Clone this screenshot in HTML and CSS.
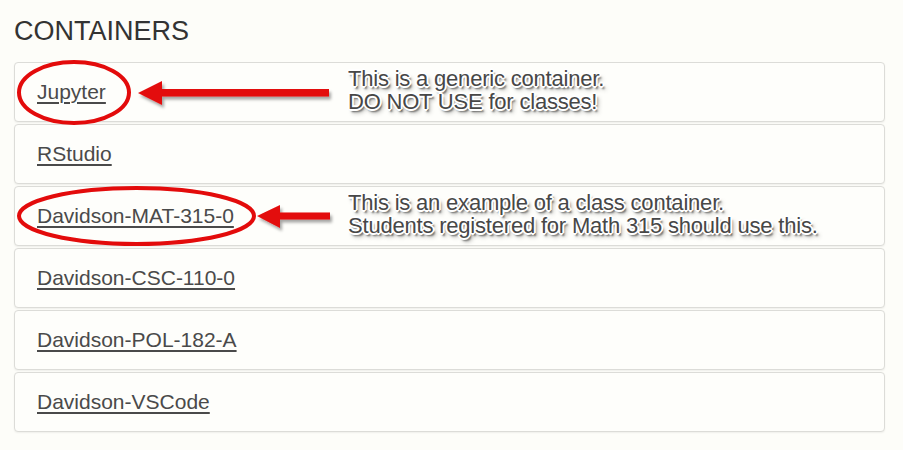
FILE: index.html
```html
<!DOCTYPE html>
<html lang="en">
<head>
  <meta charset="UTF-8">
  <title>Containers</title>
  <link rel="stylesheet" href="styles.css">
</head>
<body>
  <main class="page">
    <h2 class="title">CONTAINERS</h2>
    <!-- Lista de contenedores -->
    <div class="list">
      <div class="item"><a href="#">Jupyter</a></div>
      <div class="item"><a href="#">RStudio</a></div>
      <div class="item"><a href="#">Davidson-MAT-315-0</a></div>
      <div class="item"><a href="#">Davidson-CSC-110-0</a></div>
      <div class="item"><a href="#">Davidson-POL-182-A</a></div>
      <div class="item"><a href="#">Davidson-VSCode</a></div>
    </div>

    <!-- Anotaciones encima de la lista -->
    <svg class="marks" width="903" height="450" viewBox="0 0 903 450">
      <defs>
        <filter id="drop" x="-10%" y="-50%" width="120%" height="200%">
          <feDropShadow dx="2" dy="3" stdDeviation="1.8" flood-color="#000" flood-opacity="0.35"/>
        </filter>
      </defs>
      <ellipse cx="74" cy="92.5" rx="55" ry="30.5" fill="none" stroke="#e30b0b" stroke-width="4"/>
      <ellipse cx="136.5" cy="216" rx="117.5" ry="28" fill="none" stroke="#e30b0b" stroke-width="4"/>
      <g fill="#e30b0b" filter="url(#drop)">
        <polygon points="138,93 162,81 162,89 329,89 329,96.5 162,96.5 162,105"/>
        <polygon points="257,216 280,205 280,212.5 330,212.5 330,219.5 280,219.5 280,228"/>
      </g>
    </svg>
    <p class="note note-one">This is a generic container.<br>DO NOT USE for classes!</p>
    <p class="note note-two">This is an example of a class container.<br>Students registered for Math 315 should use this.</p>
  </main>
</body>
</html>
```

FILE: styles.css
```css
/* Estilos Generales */
body {
  margin: 0;
  background-color: #fdfdf9;
  font-family: "Liberation Sans", Arial, sans-serif;
  color: #333;
}
.page {
  position: relative;
  width: 903px;
  height: 450px;
  padding: 14px 18px 0 14px;
  box-sizing: border-box;
}
.title {
  margin: 0 0 14px;
  font-size: 27px;
  font-weight: normal;
  line-height: 34px;
  color: #333;
}
/* Lista */
.list {
  display: flex;
  flex-direction: column;
  gap: 2px;
}
.item {
  height: 60px;
  display: flex;
  align-items: center;
  padding: 0 22px;
  background: #fefefb;
  border: 1px solid #dcdcd8;
  border-radius: 4px;
  box-shadow: 0 1px 2px rgba(0,0,0,0.06);
  box-sizing: border-box;
}
.item a {
  font-size: 21px;
  color: #4a4a4a;
  text-decoration: underline;
  text-decoration-thickness: 2px;
  text-underline-offset: 3px;
}
/* Anotaciones */
.marks {
  position: absolute;
  left: 0;
  top: 0;
}
.note {
  position: absolute;
  left: 348px;
  margin: 0;
  font-size: 22px;
  line-height: 23px;
  letter-spacing: -0.2px;
  color: #474747;
  text-shadow:
    -1px -1px 0 #fff, 1px -1px 0 #fff, -1px 1px 0 #fff, 1px 1px 0 #fff,
    0 -2px 0 #fff, 0 2px 0 #fff, -2px 0 0 #fff, 2px 0 0 #fff,
    2px 3px 2px rgba(0,0,0,0.6), 3px 4px 4px rgba(0,0,0,0.35);
}
.note-one {
  top: 67px;
}
.note-two {
  top: 191px;
}
```
